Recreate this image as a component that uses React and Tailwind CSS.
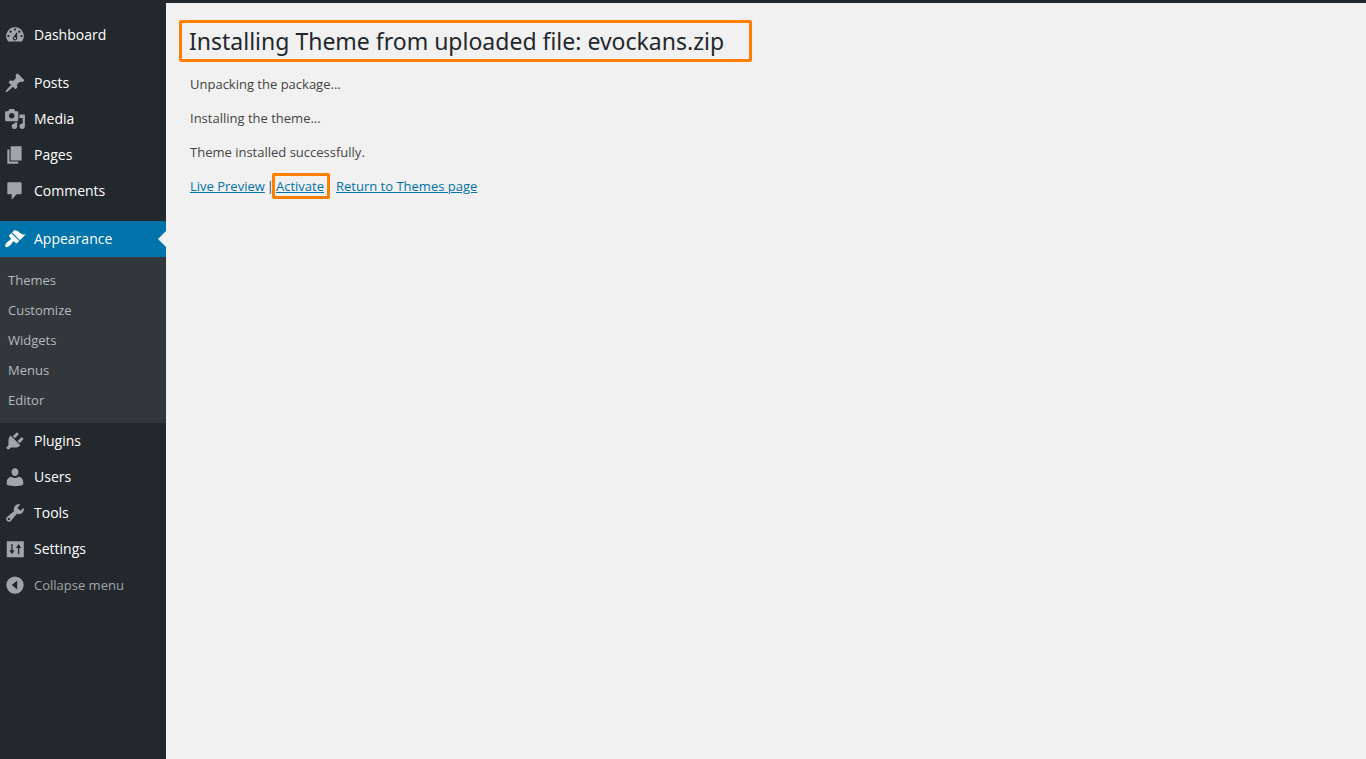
import React from 'react';
import clsx from 'clsx';

const icons = {
  dashboard: 'M3.76 16h12.48A7.998 7.998 0 0 0 10 3a7.998 7.998 0 0 0-6.24 13zM10 4c.55 0 1 .45 1 1s-.45 1-1 1-1-.45-1-1 .45-1 1-1zM6 6c.55 0 1 .45 1 1s-.45 1-1 1-1-.45-1-1 .45-1 1-1zm8 0c.55 0 1 .45 1 1s-.45 1-1 1-1-.45-1-1 .45-1 1-1zm-5.37 5.55L12 7v6c0 1.1-.9 2-2 2s-2-.9-2-2c0-.57.24-1.08.63-1.45zM4 10c.55 0 1 .45 1 1s-.45 1-1 1-1-.45-1-1 .45-1 1-1zm12 0c.55 0 1 .45 1 1s-.45 1-1 1-1-.45-1-1 .45-1 1-1zm-5 3c0-.55-.45-1-1-1s-1 .45-1 1 .45 1 1 1 1-.45 1-1z',
  posts: 'M10.44 3.02l1.82-1.82 6.36 6.35-1.83 1.82c-1.05-.68-2.48-.57-3.41.36l-.75.75c-.92.93-1.04 2.35-.35 3.41l-1.83 1.82-2.41-2.41-2.8 2.79c-.42.42-3.38 2.71-3.8 2.29s1.86-3.39 2.28-3.81l2.79-2.79L4.1 9.36l1.83-1.82c1.05.69 2.48.57 3.4-.36l.75-.75c.93-.92 1.05-2.35.36-3.41z',
  media: 'M13 11V4c0-.55-.45-1-1-1h-1.67L9 1H5L3.67 3H2c-.55 0-1 .45-1 1v7c0 .55.45 1 1 1h10c.55 0 1-.45 1-1zM7 4.5c1.38 0 2.5 1.12 2.5 2.5S8.38 9.5 7 9.5 4.5 8.38 4.5 7 5.62 4.5 7 4.5zM14 6h5v10.5c0 1.38-1.12 2.5-2.5 2.5S14 17.88 14 16.5s1.12-2.5 2.5-2.5c.17 0 .34.02.5.05V9h-3V6zm-4 8.05V13h2v3.5c0 1.38-1.12 2.5-2.5 2.5S7 17.88 7 16.5 8.12 14 9.5 14c.17 0 .34.02.5.05z',
  pages: 'M6 15V2h10v13H6zm-1 1h8v2H3V5h2v11z',
  comments: 'M4 2h11c.55 0 1 .45 1 1v9c0 .55-.45 1-1 1h-3.5L7 18v-5H4c-.55 0-1-.45-1-1V3c0-.55.45-1 1-1z',
  appearance: 'M14.48 11.06L7.41 3.99l1.5-1.5c.5-.56 2.3-.47 3.51.32 1.21.8 1.43 1.28 2.91 2.1 1.18.64 2.45 1.26 4.45.85zm-.71.71L6.7 4.7 4.93 6.47c-.39.39-.39 1.02 0 1.41l1.06 1.06c.39.39.39 1.03 0 1.42-.6.6-1.43 1.11-2.21 1.69-.35.26-.7.53-1.01.84C1.43 14.23.4 16.08 1.4 17.07c.99 1 2.84-.03 4.18-1.36.31-.31.58-.66.85-1.02.57-.78 1.08-1.61 1.69-2.21.39-.39 1.02-.39 1.41 0l1.06 1.06c.39.39 1.02.39 1.41 0z',
  plugins: 'M13.11 4.36L9.87 7.6 8 5.73l3.24-3.24c.35-.34 1.05-.2 1.56.32.52.51.66 1.21.31 1.55zm-8 1.77l.91-1.12 9.01 9.01-1.19.84c-.71.71-2.63 1.16-3.82 1.16H6.14L4.9 17.26c-.59.59-1.54.59-2.12 0-.59-.58-.59-1.53 0-2.12l1.24-1.24v-3.88c0-1.13.4-3.19 1.09-3.89zm7.26 3.97l3.24-3.24c.34-.35 1.04-.21 1.55.31.52.51.66 1.21.31 1.55l-3.24 3.25z',
  users: 'M10 9.2c-2 0-3.1-1.7-3.1-3.7C6.900 3.400 8.200 2 10 2s3.100 1.400 3.100 3.500c0 2-1.100 3.700-3.100 3.700zM6.700 9.800c.9.800 2 1.200 3.300 1.200s2.400-.4 3.300-1.200c2.500.4 4.200 2.300 4.200 4.700V17s-3.400 1.300-7.500 1.300S2.500 17 2.500 17v-2.500c0-2.400 1.700-4.300 4.200-4.700z',
  tools: 'M16.68 9.77c-1.34 1.34-3.3 1.67-4.95.99l-5.41 6.52c-.99.99-2.59.99-3.58 0s-.99-2.59 0-3.57l6.52-5.42c-.68-1.65-.35-3.61.99-4.95 1.28-1.28 3.12-1.62 4.72-1.06l-2.89 2.89 2.82 2.82 2.86-2.87c.53 1.58.18 3.39-1.08 4.65zM3.81 16.21c.4.39 1.04.39 1.43 0 .4-.4.4-1.04 0-1.43-.39-.4-1.03-.4-1.43 0-.39.39-.39 1.03 0 1.43z',
  settings: 'M2.5 3H18v14.5H2.5zM6.6 5.5v5.7H4.8l2.4 3.6 2.4-3.6H7.8V5.5zM12.7 14.8V9.2h-1.8l2.4-3.7 2.4 3.7h-1.8v5.6z',
  collapse: 'M10 2.2a7.9 7.9 0 1 0 0 15.8 7.9 7.9 0 0 0 0-15.8zM12 6v8l-5-4z',
};

const groups = [
  [{ label: 'Dashboard', icon: 'dashboard' }],
  [
    { label: 'Posts', icon: 'posts' },
    { label: 'Media', icon: 'media' },
    { label: 'Pages', icon: 'pages' },
    { label: 'Comments', icon: 'comments' },
  ],
  [
    {
      label: 'Appearance',
      icon: 'appearance',
      current: true,
      children: ['Themes', 'Customize', 'Widgets', 'Menus', 'Editor'],
    },
    { label: 'Plugins', icon: 'plugins' },
    { label: 'Users', icon: 'users' },
    { label: 'Tools', icon: 'tools' },
    { label: 'Settings', icon: 'settings' },
  ],
];

const messages = [
  'Unpacking the package...',
  'Installing the theme...',
  'Theme installed successfully.',
];

const Icon = ({ name }) => (
  <svg
    viewBox="0 0 20 20"
    fill="currentColor"
    fillRule="evenodd"
    aria-hidden="true"
    className="size-[22px] shrink-0"
  >
    <path d={icons[name]} />
  </svg>
);

const MenuItem = ({ item }) => (
  <li>
    <a
      href="#"
      aria-current={item.current ? 'page' : undefined}
      className={clsx(
        'relative flex h-9 items-center gap-2 pl-1',
        item.current ? 'bg-[#0073aa] text-white' : 'text-[#a0a5aa]'
      )}
    >
      <Icon name={item.icon} />
      <span className="text-white">{item.label}</span>
      {/* Notch pointing at the content area */}
      {item.current && (
        <span className="absolute right-0 top-1/2 -translate-y-1/2 border-y-8 border-r-8 border-y-transparent border-r-[#f1f1f1]" />
      )}
    </a>
    {item.children && (
      <ul className="bg-[#32373c] py-2 text-[13px] text-[#b4b9be]">
        {item.children.map((child) => (
          <li key={child}>
            <a href="#" className="flex h-[30px] items-center px-2">{child}</a>
          </li>
        ))}
      </ul>
    )}
  </li>
);

const Sidebar = () => (
  <nav className="w-[166px] shrink-0 bg-[#23282d] pt-[14px] text-sm">
    <div className="flex flex-col gap-3">
      {groups.map((items) => (
        <ul key={items[0].label}>
          {items.map((item) => (
            <MenuItem key={item.label} item={item} />
          ))}
        </ul>
      ))}
    </div>
    <button type="button" className="flex h-9 w-full items-center gap-2 pl-1 text-[13px] text-[#a0a5aa]">
      <Icon name="collapse" />
      <span>Collapse menu</span>
    </button>
  </nav>
);

const App = () => (
  <div className="flex min-h-screen flex-col bg-[#f1f1f1] font-['Open_Sans',sans-serif]">
    <div className="h-[3px] bg-[#23282d]" />
    <div className="flex grow">
      <Sidebar />
      <main className="min-w-0 grow pl-[13px] pt-[17px] text-[13px] text-[#444]">
        <h1 className="inline-block rounded-xs border-3 border-[#ff7f00] pl-[7px] pr-[25px] font-['Noto_Sans',sans-serif] text-[23px] leading-9 text-[#23282d]">
          Installing Theme from uploaded file: evockans.zip
        </h1>
        <div className="flex flex-col gap-[14px] pl-[11px] pt-3 leading-5">
          {messages.map((message) => (
            <p key={message}>{message}</p>
          ))}
          <p className="flex items-center text-[#0073aa]">
            <a href="#" className="underline">Live Preview</a>
            <span className="-mr-0.5 ml-0.5 text-[#444]">|</span>
            <a href="#" className="-my-[3px] rounded-xs border-3 border-[#ff7f00] pl-px pr-[3px] underline">Activate</a>
            <a href="#" className="ml-[6px] underline">Return to Themes page</a>
          </p>
        </div>
      </main>
    </div>
  </div>
);

export default App;
